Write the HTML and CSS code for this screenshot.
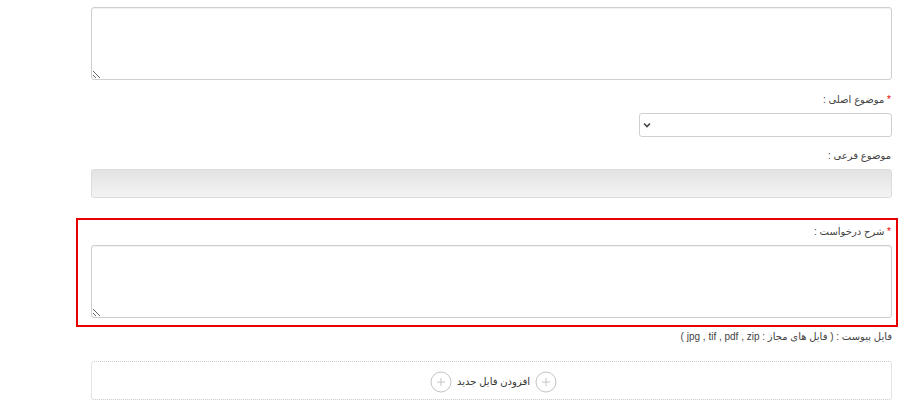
FILE: index.html
```html
<!DOCTYPE html>
<html lang="fa" dir="rtl">
<head>
<meta charset="utf-8">
<title>فرم درخواست</title>
<link rel="stylesheet" href="styles.css">
</head>
<body>
<div class="page">
  <form class="form">
    <div class="field field-first">
      <label class="label">توضیحات :</label>
      <textarea class="textarea"></textarea>
    </div>

    <div class="field field-main">
      <label class="label"><span class="req">*</span> موضوع اصلی :</label>
      <div class="select-wrap">
        <select class="select"><option></option></select>
        <svg class="chev" width="8" height="6" viewBox="0 0 8 6"><path d="M1 1.5 L4 4.5 L7 1.5" fill="none" stroke="#444" stroke-width="1.6"/></svg>
      </div>
    </div>

    <div class="field field-sub">
      <label class="label">موضوع فرعی :</label>
      <input class="input" type="text" disabled>
    </div>

    <div class="field field-error">
      <label class="label"><span class="req">*</span> شرح درخواست :</label>
      <textarea class="textarea"></textarea>
    </div>

    <div class="note">فایل پیوست : ( فایل های مجاز : <span dir="ltr">jpg , tif , pdf , zip</span> )</div>

    <div class="dropzone">
      <div class="add">
        <svg class="plus" width="22" height="22" viewBox="0 0 22 22"><circle cx="11" cy="11" r="10" fill="#fff" stroke="#c4c4c4" stroke-width="1"/><path d="M11 7 V15 M7 11 H15" stroke="#c4c4c4" stroke-width="1"/></svg>
        <span class="add-text">افزودن فایل جدید</span>
        <svg class="plus" width="22" height="22" viewBox="0 0 22 22"><circle cx="11" cy="11" r="10" fill="#fff" stroke="#c4c4c4" stroke-width="1"/><path d="M11 7 V15 M7 11 H15" stroke="#c4c4c4" stroke-width="1"/></svg>
      </div>
    </div>
  </form>
</div>
</body>
</html>
```
FILE: styles.css
```css
html, body {
  margin: 0;
  padding: 0;
  background: #fff;
  overflow: hidden;
}
body {
  font-family: "Liberation Sans", "DejaVu Sans", sans-serif;
  font-size: 10px;
  color: #444;
}
.page {
  width: 801px;
  margin-left: 91px;
  margin-right: auto;
}
.form {
  display: flex;
  flex-direction: column;
}
.field {
  display: flex;
  flex-direction: column;
  gap: 5px;
}
.label {
  display: block;
  line-height: 16px;
  height: 16px;
  white-space: nowrap;
  margin-right: 1px;
}
.req {
  color: #e00;
}
.field-first {
  margin-top: -14px;
}
.field-main {
  margin-top: 12px;
}
.field-sub {
  margin-top: 11px;
}
.textarea {
  box-sizing: border-box;
  width: 100%;
  height: 73px;
  margin: 0;
  border: 1px solid #cfcfcf;
  border-radius: 3px;
  box-shadow: inset 0 1px 1px rgba(0,0,0,.06);
  font-family: inherit;
  resize: vertical;
  background: #fff;
  display: block;
}
.select-wrap {
  position: relative;
  width: 253px;
  height: 24px;
}
.select {
  appearance: none;
  -webkit-appearance: none;
  box-sizing: border-box;
  width: 100%;
  height: 24px;
  margin: 0;
  border: 1px solid #cfcfcf;
  border-radius: 3px;
  background: #fff;
  font-family: inherit;
  display: block;
}
.chev {
  position: absolute;
  left: 4px;
  top: 9px;
}
.input {
  box-sizing: border-box;
  width: 100%;
  height: 29px;
  margin: 0;
  border: 1px solid #dcdcdc;
  border-radius: 3px;
  background: linear-gradient(#e3e3e3, #f3f3f3);
  display: block;
}
.field-error {
  margin-top: 20px;
  margin-left: -15px;
  margin-right: -6px;
  border: 2px solid #e60000;
  padding: 4px 4px 7px 13px;
}
.note {
  margin-top: 2px;
  line-height: 16px;
  height: 16px;
  white-space: nowrap;
  color: #444;
}
.dropzone {
  margin-top: 16px;
  box-sizing: border-box;
  height: 39px;
  border: 1px dotted #c8c8c8;
  border-radius: 3px;
  display: flex;
  align-items: center;
  justify-content: center;
}
.add {
  display: flex;
  align-items: center;
  gap: 5px;
  padding-top: 2px;
  padding-left: 4px;
  color: #333;
}
.plus {
  display: block;
}
.add-text {
  line-height: 16px;
  font-size: 10px;
}
```
